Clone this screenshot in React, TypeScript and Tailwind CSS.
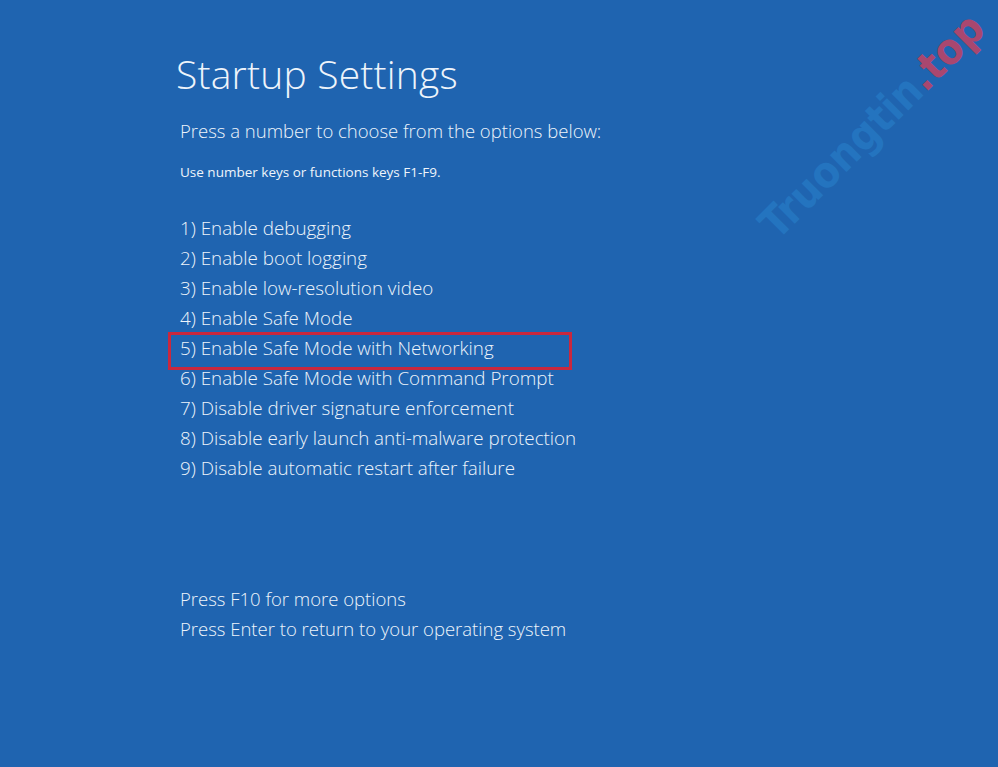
const options = [
  '1) Enable debugging',
  '2) Enable boot logging',
  '3) Enable low-resolution video',
  '4) Enable Safe Mode',
  '5) Enable Safe Mode with Networking',
  '6) Enable Safe Mode with Command Prompt',
  '7) Disable driver signature enforcement',
  '8) Disable early launch anti-malware protection',
  '9) Disable automatic restart after failure',
];

// the option that is boxed in red
const HIGHLIGHT = 4;

export default function App() {
  return (
    <div className="relative h-[767px] w-[998px] overflow-hidden bg-[#1f64b0] font-['Open_Sans',sans-serif] text-[#eef4fb]">
      <div className="flex flex-col pl-[180px] pt-[50px]">
        <h1 className="-ml-[4px] text-[39px] font-light leading-[48px] tracking-[0.2px]">Startup Settings</h1>
        <p className="mt-[20px] text-[18.5px] font-light leading-[26px]">
          Press a number to choose from the options below:
        </p>
        <p className="mt-[19px] text-[13.5px] leading-[18px]">Use number keys or functions keys F1-F9.</p>

        <ul className="mt-[32px] flex flex-col">
          {options.map((o, i) => (
            <li key={i} className="relative text-[18.8px] font-light leading-[30px]">
              {o}
              {i === HIGHLIGHT && (
                <span className="absolute -left-[12px] top-[-1px] h-[38px] w-[404px] border-[3px] border-[#c9283e]" />
              )}
            </li>
          ))}
        </ul>

        <div className="mt-[101px] flex flex-col text-[18.5px] font-light leading-[30px]">
          <p>Press F10 for more options</p>
          <p>Press Enter to return to your operating system</p>
        </div>
      </div>

      {/* watermark */}
      <div className="pointer-events-none absolute left-[872px] top-[126px] -translate-x-1/2 -translate-y-1/2 -rotate-45 select-none whitespace-nowrap font-['DejaVu_Sans_Condensed',sans-serif] text-[43px] font-bold leading-none">
        <span className="text-[#2474bf]">Truongtin</span>
        <span className="text-[#a9476f]">.top</span>
      </div>
    </div>
  );
}
